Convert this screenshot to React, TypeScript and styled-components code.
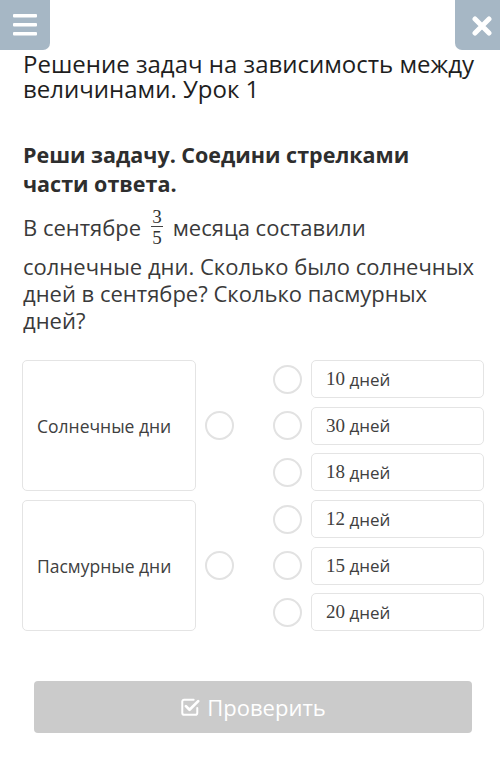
import React from "react";
import styled, { createGlobalStyle } from "styled-components";

const GlobalStyle = createGlobalStyle`
  html, body {
    margin: 0;
    padding: 0;
    background: #ffffff;
  }
  body {
    font-family: "Open Sans", "Noto Sans", Arial, sans-serif;
    color: #222222;
  }
`;

type Group = {
  label: string;
  options: string[];
};

const groups: Group[] = [
  { label: "Солнечные дни", options: ["10", "30", "18"] },
  { label: "Пасмурные дни", options: ["12", "15", "20"] },
];

const MenuIcon = () => (
  <svg width="24" height="22" viewBox="0 0 24 22">
    <rect x="0" y="0" width="24" height="3.5" rx="1" fill="#fff" />
    <rect x="0" y="9" width="24" height="3.5" rx="1" fill="#fff" />
    <rect x="0" y="18" width="24" height="3.5" rx="1" fill="#fff" />
  </svg>
);

const CloseIcon = () => (
  <svg width="20" height="20" viewBox="0 0 20 20">
    <path
      d="M3 3 L17 17 M17 3 L3 17"
      stroke="#fff"
      strokeWidth="5"
      strokeLinecap="round"
    />
  </svg>
);

const CheckSquareIcon = () => (
  <svg width="20" height="20" viewBox="0 0 22 22" fill="none">
    <path
      d="M15 3 H4.5 A2 2 0 0 0 2.5 5 V17.5 A2 2 0 0 0 4.5 19.5 H17 A2 2 0 0 0 19 17.5 V12"
      stroke="#fff"
      strokeWidth="2.2"
      strokeLinecap="round"
    />
    <path
      d="M6.5 10 L10.5 14 L20 4.5"
      stroke="#fff"
      strokeWidth="3"
      strokeLinecap="round"
      strokeLinejoin="round"
    />
  </svg>
);

const App = () => {
  return (
    <Page>
      <GlobalStyle />
      <TopBar>
        <MenuBtn>
          <MenuIcon />
        </MenuBtn>
        <CloseBtn>
          <CloseIcon />
        </CloseBtn>
      </TopBar>
      <Title>Решение задач на зависимость между величинами. Урок 1</Title>

      <Task>
        <TaskHeading>Реши задачу. Соедини стрелками части ответа.</TaskHeading>
        <TaskText>
          <FirstLine>
            В сентябре{" "}
            <Fraction>
              <Num>3</Num>
              <Den>5</Den>
            </Fraction>{" "}
            месяца составили
          </FirstLine>
          солнечные дни. Сколько было солнечных дней в сентябре? Сколько
          пасмурных дней?
        </TaskText>
      </Task>

      <Matching>
        {groups.map(g => (
          <GroupRow key={g.label}>
            <LabelBox>{g.label}</LabelBox>
            <LeftDot>
              <Dot />
            </LeftDot>
            <Options>
              {g.options.map(o => (
                <OptionRow key={o}>
                  <Dot />
                  <OptionBox>
                    <Digits>{o}</Digits> дней
                  </OptionBox>
                </OptionRow>
              ))}
            </Options>
          </GroupRow>
        ))}
      </Matching>

      <Footer>
        <CheckBtn>
          <CheckSquareIcon />
          Проверить
        </CheckBtn>
      </Footer>
    </Page>
  );
};
export default App;

const Page = styled.div`
  width: 500px;
  min-height: 767px;
  box-sizing: border-box;
`;

const TopBar = styled.div`
  display: flex;
  justify-content: space-between;
  height: 50px;
`;

const MenuBtn = styled.button`
  width: 50px;
  height: 50px;
  border: 0;
  padding: 0;
  border-radius: 0 0 7px 0;
  background: #a6b7c5;
  display: flex;
  align-items: center;
  justify-content: center;
`;

const CloseBtn = styled.button`
  width: 45px;
  height: 50px;
  border: 0;
  padding: 2px 0 0 8px;
  border-radius: 0 0 0 7px;
  background: #a6b7c5;
  display: flex;
  align-items: center;
  justify-content: center;
`;

const Title = styled.h1`
  margin: 1px 12px 0 23px;
  font-size: 24px;
  font-weight: 400;
  line-height: 25px;
  color: #1e1e1e;
`;

const Task = styled.div`
  padding: 0 22px 0 23px;
  margin-top: 39px;
`;

const TaskHeading = styled.div`
  font-size: 21.5px;
  font-weight: 700;
  line-height: 29px;
  color: #2e2e2e;
  padding-right: 30px;
`;

const TaskText = styled.div`
  margin-top: 9px;
  font-size: 22px;
  line-height: 27px;
  color: #3a3a3a;
`;

const FirstLine = styled.div`
  display: flex;
  align-items: center;
  gap: 7px;
  height: 40px;
  margin-bottom: 6px;
`;

const Fraction = styled.span`
  display: inline-flex;
  flex-direction: column;
  align-items: center;
  font-family: "Liberation Serif", "DejaVu Serif", serif;
  font-size: 19px;
  line-height: 17px;
  color: #333;
  margin: 0 3px;
`;

const Num = styled.span`
  padding: 0 1px 1px;
  border-bottom: 1px solid #444;
`;

const Den = styled.span`
  padding-top: 2px;
`;

const Matching = styled.div`
  margin-top: 26px;
  padding: 0 16px 0 22px;
  display: flex;
  flex-direction: column;
  gap: 9px;
`;

const GroupRow = styled.div`
  display: flex;
  align-items: stretch;
`;

const LabelBox = styled.div`
  width: 174px;
  box-sizing: border-box;
  border: 1px solid #e4e4e4;
  border-radius: 5px;
  display: flex;
  align-items: center;
  padding-left: 14px;
  font-size: 17.5px;
  color: #404040;
`;

const LeftDot = styled.div`
  display: flex;
  align-items: center;
  padding-left: 9px;
  width: 77px;
  box-sizing: border-box;
`;

const Dot = styled.div`
  width: 29px;
  height: 29px;
  box-sizing: border-box;
  border: 2px solid #e2e2e2;
  border-radius: 50%;
  flex-shrink: 0;
`;

const Options = styled.div`
  display: grid;
  grid-template-rows: repeat(3, 38px);
  row-gap: 8.5px;
  flex: 1;
`;

const OptionRow = styled.div`
  display: flex;
  align-items: center;
  gap: 9px;
`;

const OptionBox = styled.div`
  flex: 1;
  height: 38px;
  box-sizing: border-box;
  border: 1px solid #e4e4e4;
  border-radius: 5px;
  display: flex;
  align-items: center;
  padding-left: 14px;
  font-size: 17px;
  color: #404040;
  white-space: pre;
`;

const Digits = styled.span`
  font-family: "Liberation Serif", "DejaVu Serif", serif;
  font-size: 19px;
`;

const Footer = styled.div`
  padding: 50px 28px 0 34px;
`;

const CheckBtn = styled.button`
  width: 438px;
  height: 52px;
  border: 0;
  border-radius: 4px;
  background: #cbcbcb;
  color: #ffffff;
  font-family: "Open Sans", "Noto Sans", Arial, sans-serif;
  font-size: 22px;
  display: flex;
  align-items: center;
  justify-content: center;
  gap: 7px;
`;
